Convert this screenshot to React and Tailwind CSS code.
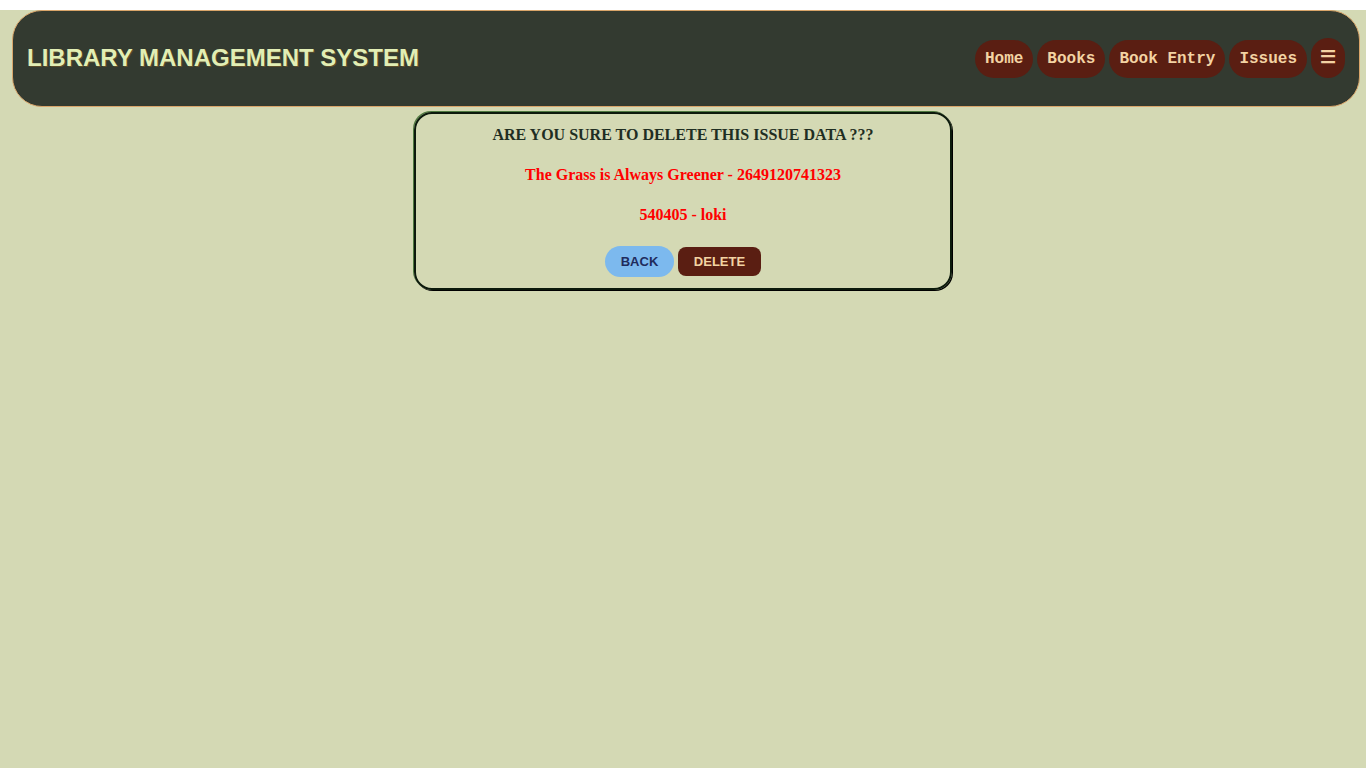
import React from 'react'

const navItems = ['Home', 'Books', 'Book Entry', 'Issues']

function Header() {
  return (
    <header className="ml-3 mr-[6px] mt-[10px] flex h-[97px] items-center justify-between rounded-[30px] border border-[#d9a56a] bg-[#333a30] pl-[14px] pr-[14px]">
      <h1 className="-mt-[2px] font-['Liberation_Sans',Arial,sans-serif] text-[24px] font-bold text-[#e2eeb4] [text-shadow:1px_1px_0_rgba(120,90,40,0.6)]">
        LIBRARY MANAGEMENT SYSTEM
      </h1>
      <nav className="flex items-center gap-[4px]">
        {navItems.map(item => (
          <a
            key={item}
            href="#"
            className="flex h-[38px] items-center rounded-full bg-[#5a1e12] px-[10px] font-['Liberation_Mono','Courier_New',monospace] text-[16px] font-bold text-[#f3d3a3]"
          >
            {item}
          </a>
        ))}
        <button className="-mt-[2px] flex h-[40px] w-[34px] items-center justify-center rounded-full bg-[#5a1e12] font-['Liberation_Sans',Arial,sans-serif] text-[18px] font-bold text-[#f3d3a3]">
          ☰
        </button>
      </nav>
    </header>
  )
}

export default function App() {
  return (
    <div className="min-h-screen bg-[#d4d9b4] pb-4">
      <Header />
      <div className="mx-auto mt-[5px] w-[538px] rounded-[18px] border-2 border-[#0c1a0c] px-4 pt-[11px] pb-[11px] text-center font-['Liberation_Serif','Times_New_Roman',serif] shadow-[1px_1px_0_#000,-1px_-1px_0_#4f7a40]">
        <h3 className="text-[16px] font-bold leading-[20px] text-[#1f2e22]">
          ARE YOU SURE TO DELETE THIS ISSUE DATA ???
        </h3>
        <p className="mt-[20px] text-[16px] font-bold leading-[20px] text-[#ff0000]">
          The Grass is Always Greener - 2649120741323
        </p>
        <p className="mt-[20px] text-[16px] font-bold leading-[20px] text-[#ff0000]">
          540405 - loki
        </p>
        <div className="mt-[21px] flex items-center justify-center gap-[4px] font-['Liberation_Sans',Arial,sans-serif] text-[13px] font-bold">
          <button className="h-[31px] w-[69px] rounded-full bg-[#7cb9ee] text-[#1f2b5c]">
            BACK
          </button>
          <button className="h-[29px] w-[83px] rounded-[8px] bg-[#5a1e12] text-[#f3d3a3]">
            DELETE
          </button>
        </div>
      </div>
    </div>
  )
}
